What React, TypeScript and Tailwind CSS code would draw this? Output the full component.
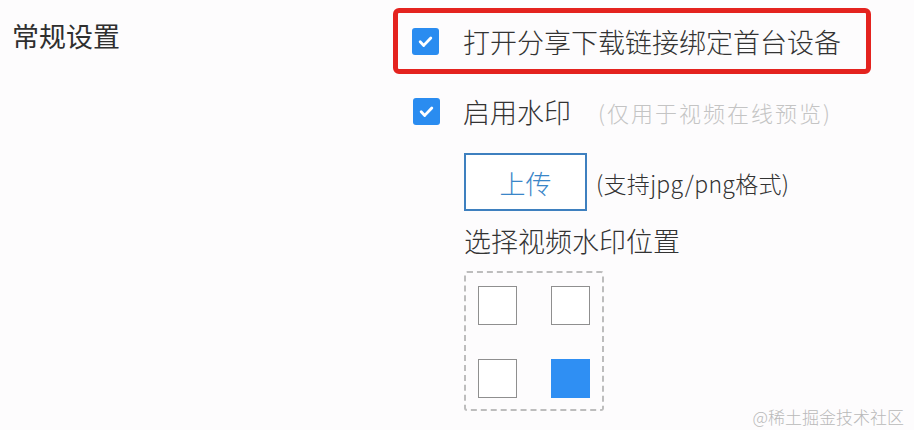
import React from 'react';

const cjk = { fontFamily: '"Noto Sans CJK SC", "Noto Sans", sans-serif' };

function Checkbox() {
  return (
    <span className="flex h-[27px] w-[27px] shrink-0 items-center justify-center rounded-[3px] bg-[#2a8cf0]">
      <svg width="17" height="17" viewBox="0 0 24 24" fill="none">
        <path d="M4.5 12.5l5 5L19.5 7" stroke="#fff" strokeWidth="4" strokeLinecap="round" strokeLinejoin="round" />
      </svg>
    </span>
  );
}

export default function App() {
  const cells = [false, false, false, true];

  return (
    <div className="relative flex h-[430px] w-[914px] overflow-hidden bg-[#fdfcfd] font-light text-[#333]" style={cjk}>
      {/* Left label */}
      <div className="w-[393px] shrink-0 pl-[12px] pt-[20px]">
        <h1 className="text-[27px] leading-[32px] font-normal text-[#2f2f2f]">常规设置</h1>
      </div>

      {/* Settings */}
      <div className="flex flex-col pt-[8px]">
        <div className="flex h-[66px] w-[478px] items-center gap-[24px] rounded-[6px] border-[5px] border-[#e4231f] pl-[14px]">
          <Checkbox />
          <span className="text-[27px] leading-none">打开分享下载链接绑定首台设备</span>
        </div>

        <div className="mt-[24px] flex items-center pl-[20px]">
          <Checkbox />
          <span className="ml-[23px] text-[27px] leading-none">启用水印</span>
          <span className="ml-[27px] text-[22px] leading-none tracking-[2px] text-[#c4c4c4]">(仅用于视频在线预览)</span>
        </div>

        <div className="ml-[71px] mt-[28px] flex items-center">
          <button className="flex h-[58px] w-[123px] items-center justify-center border-2 border-[#3e80bf] bg-white text-[26px] text-[#3a86c8]">
            上传
          </button>
          <span className="ml-[9px] pt-[2px] text-[23px] leading-none tracking-[0.3px] text-[#333]">(支持jpg/png格式)</span>
        </div>

        <div className="ml-[71px] mt-[14px] text-[27px] leading-[32px]">选择视频水印位置</div>

        <div className="ml-[71px] mt-[14px] grid h-[140px] w-[140px] grid-cols-2 content-start gap-x-[33px] gap-y-[34px] rounded-[3px] border-2 border-dashed border-[#bdbdbd] px-[12px] pt-[13px]">
          {cells.map((on, i) => (
            <div
              key={i}
              className={on ? 'h-[39px] w-[39px] bg-[#2f8ff3]' : 'h-[39px] w-[39px] border border-[#8f8f8f] bg-white'}
            />
          ))}
        </div>
      </div>

      {/* Watermark */}
      <div className="absolute bottom-[2px] right-[10px] text-[17px] leading-[22px] text-[#b9b9b9]">@稀土掘金技术社区</div>
    </div>
  );
}
